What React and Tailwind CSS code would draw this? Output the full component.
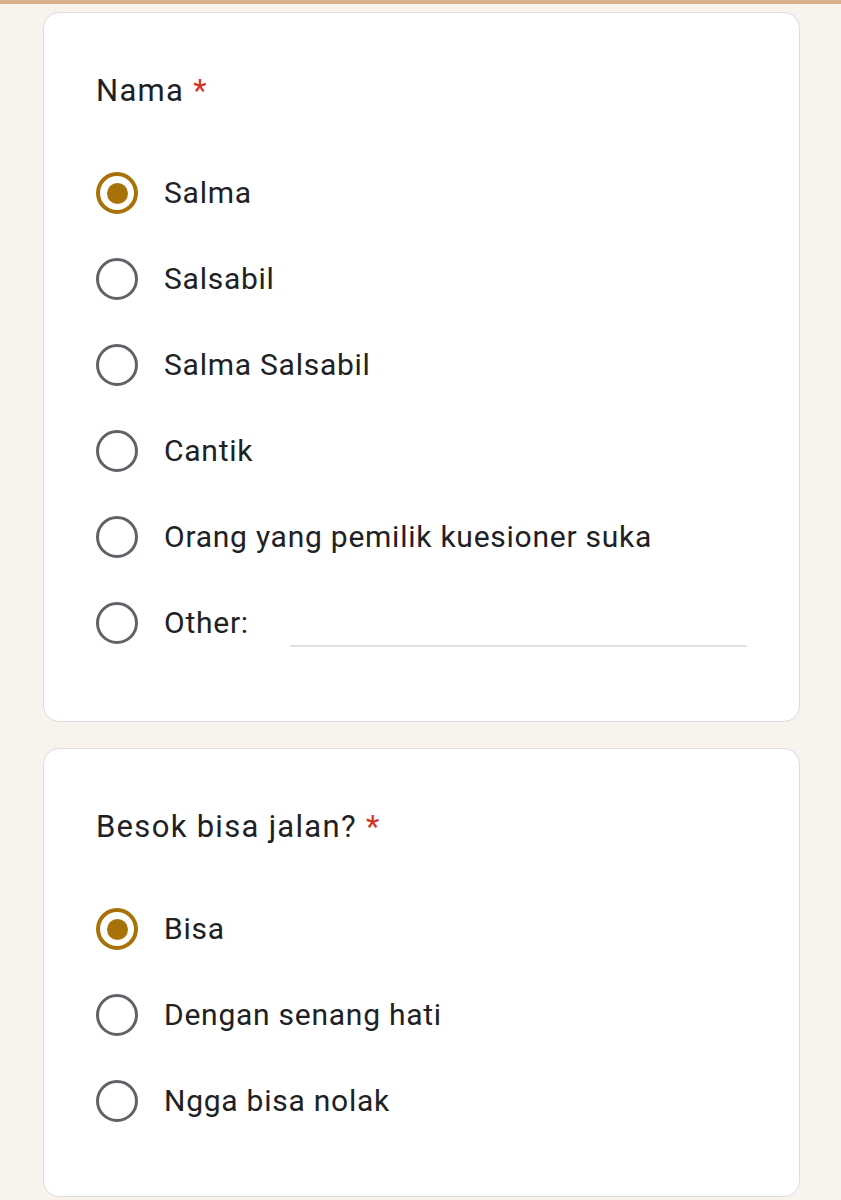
import React from "react";

function Radio({ checked }) {
  if (checked) {
    return (
      <div className="w-[42px] h-[42px] rounded-full border-[4px] border-[#a8720a] flex items-center justify-center shrink-0">
        <div className="w-[21px] h-[21px] rounded-full bg-[#a8720a]" />
      </div>
    );
  }
  return <div className="w-[42px] h-[42px] rounded-full border-[3.5px] border-[#5f6368] shrink-0" />;
}

function Option({ label, checked, other }) {
  return (
    <div className="h-[86px] flex items-center">
      <Radio checked={checked} />
      <span className="ml-[26px] text-[30px] tracking-[0.75px] text-[#202124] leading-none">{label}</span>
      {other && <div className="ml-[41px] flex-1 h-[2px] bg-[#e0e0e0] mt-[46px] mr-[10px]" />}
    </div>
  );
}

function Card({ title, options, pb, className = "" }) {
  return (
    <div className={`ml-[43px] w-[757px] bg-white border border-[#dadce0] rounded-[16px] pt-[58px] pl-[52px] pr-[42px] ${pb} ${className}`}>
      <div className="text-[31px] tracking-[1.3px] leading-[40px] text-[#202124] mb-[39px]">
        {title} <span className="text-[#d93025]">*</span>
      </div>
      {options.map((o, i) => (
        <Option key={i} {...o} />
      ))}
    </div>
  );
}

export default function App() {
  return (
    <div className="min-h-[1200px] bg-[#f8f3ed]" style={{ fontFamily: "Roboto, 'Noto Sans', sans-serif" }}>
      <div className="h-[4px] bg-[#d6b088]" />
      <div className="pt-[8px]">
        <Card
          title="Nama"
          pb="pb-[55px]"
          options={[
            { label: "Salma", checked: true },
            { label: "Salsabil" },
            { label: "Salma Salsabil" },
            { label: "Cantik" },
            { label: "Orang yang pemilik kuesioner suka" },
            { label: "Other:", other: true },
          ]}
        />
        <Card
          title="Besok bisa jalan?"
          pb="pb-[52px]"
          className="mt-[26px]"
          options={[
            { label: "Bisa", checked: true },
            { label: "Dengan senang hati" },
            { label: "Ngga bisa nolak" },
          ]}
        />
      </div>
    </div>
  );
}
